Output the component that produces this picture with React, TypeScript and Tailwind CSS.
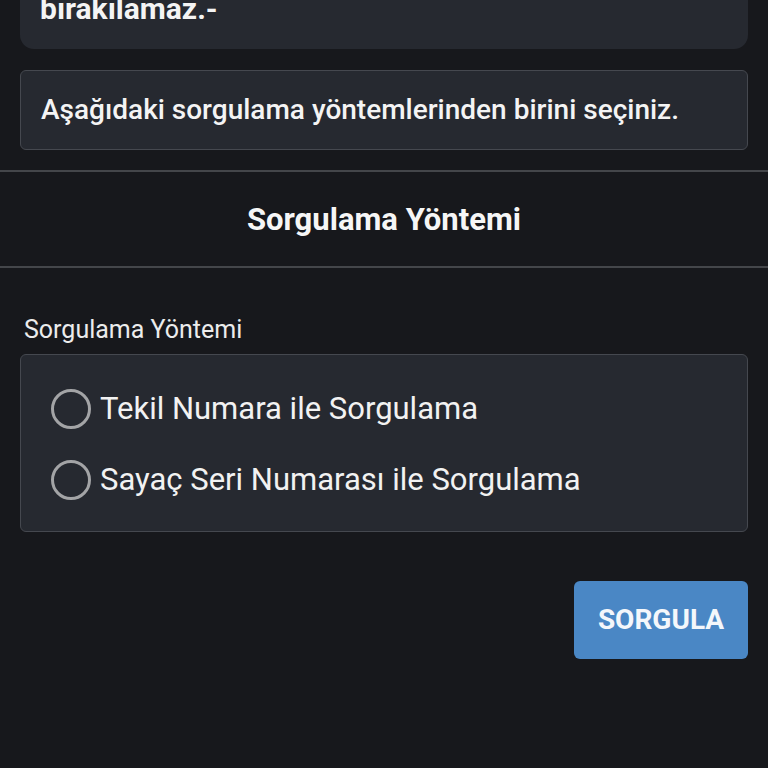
import React from "react";

function Radio({ label }: { label: string }) {
  return (
    <div className="flex items-center h-[71px]">
      <span className="w-[40px] h-[40px] rounded-full border-[3px] border-[#a3a4a6] shrink-0" />
      <span className="ml-[9px] text-[31px] text-[#f2f2f2] leading-none">{label}</span>
    </div>
  );
}

export default function App() {
  return (
    <div
      className="min-h-[768px] w-[768px] bg-[#17181c] text-white overflow-hidden"
      style={{ fontFamily: "Roboto, 'Noto Sans', sans-serif" }}
    >
      <div className="px-[20px]">
        <div className="-mt-[20px] h-[69px] rounded-b-[14px] bg-[#262930] pl-[20px] flex items-start pt-[14px]">
          <span className="text-[30px] font-bold leading-[30px] text-[#f4f4f4]">bırakılamaz.-</span>
        </div>
        <div className="mt-[21px] h-[80px] rounded-[6px] border border-[#45484f] bg-[#262930] px-[20px] flex items-center">
          <span className="text-[28px] font-medium text-[#f4f4f4] leading-none">
            Aşağıdaki sorgulama yöntemlerinden birini seçiniz.
          </span>
        </div>
      </div>
      <div className="mt-[20px] border-t-2 border-[#44464a] h-[98px] flex items-center justify-center border-b-2">
        <span className="text-[31px] font-bold text-[#f6f6f6] leading-none">Sorgulama Yöntemi</span>
      </div>
      <div className="px-[20px]">
        <div className="mt-[48px] pl-[4px] text-[25px] text-[#ececec] leading-[28px]">Sorgulama Yöntemi</div>
        <div className="mt-[10px] h-[178px] rounded-[6px] border border-[#45484f] bg-[#262930] pl-[30px] pt-[18px]">
          <Radio label="Tekil Numara ile Sorgulama" />
          <Radio label="Sayaç Seri Numarası ile Sorgulama" />
        </div>
        <div className="mt-[49px] flex justify-end">
          <button className="w-[174px] h-[78px] rounded-[6px] bg-[#4a87c5] text-[28px] font-bold text-[#f4f7fb]">
            SORGULA
          </button>
        </div>
      </div>
    </div>
  );
}
